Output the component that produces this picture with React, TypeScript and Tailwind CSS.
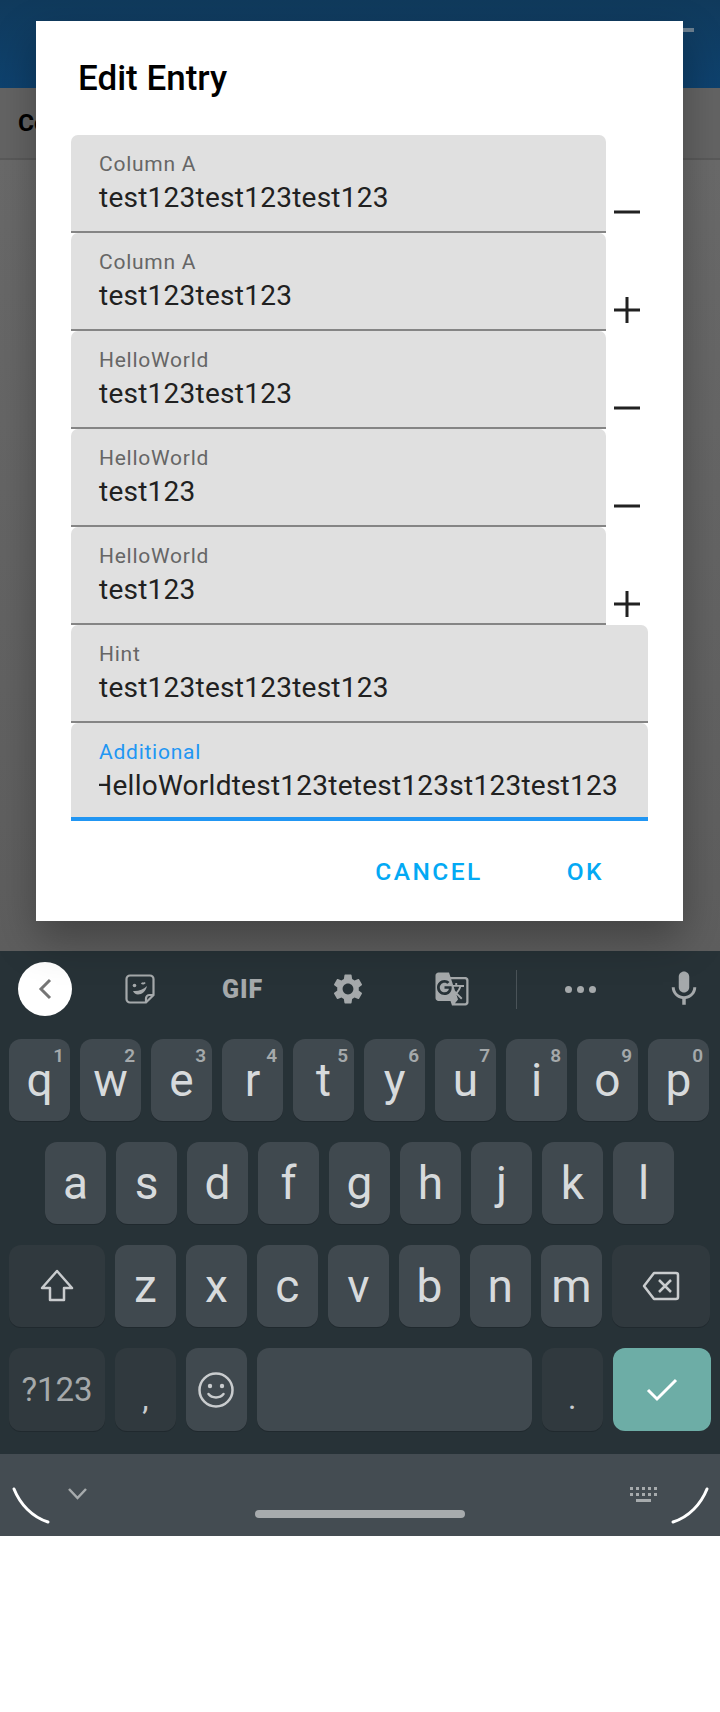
import { MdGTranslate, MdMic, MdSettings } from "react-icons/md";

const font = { fontFamily: "Roboto, sans-serif" };

const fields = [
    { label: "Column A", value: "test123test123test123", icon: "minus" },
    { label: "Column A", value: "test123test123", icon: "plus" },
    { label: "HelloWorld", value: "test123test123", icon: "minus" },
    { label: "HelloWorld", value: "test123", icon: "minus" },
    { label: "HelloWorld", value: "test123", icon: "plus" },
];

const topRow = [
    ["q", "1"], ["w", "2"], ["e", "3"], ["r", "4"], ["t", "5"],
    ["y", "6"], ["u", "7"], ["i", "8"], ["o", "9"], ["p", "0"],
];

const FieldIcon = ({ icon }: { icon: string }) => (
    <svg viewBox="0 0 26 26" className="w-[26px] h-[26px] ml-2 mt-[64px] shrink-0" fill="#212121">
        <rect x="0" y="11.5" width="26" height="3" />
        {icon === "plus" && <rect x="11.5" y="0" width="3" height="26" />}
    </svg>
);

const Field = ({ label, value, focused }: { label: string; value: string; focused?: boolean }) => (
    <div className={`flex-1 h-[98px] bg-[#e0e0e0] rounded-t-[7px] pl-7 pt-[15px] min-w-0 ${focused ? "border-b-4 border-[#2196f3]" : "border-b-2 border-[#858585]"}`}>
        <div className={`text-[21px] leading-7 tracking-[0.75px] ${focused ? "text-[#2196f3]" : "text-[#666666]"}`}>{label}</div>
        {focused ? (
            <div className="w-[519px] overflow-hidden flex justify-end text-[28px] leading-9 tracking-[0.25px] mt-0.5 text-[#212121] whitespace-nowrap">
                <span className="shrink-0">HelloWorldtest123tetest123st123test123</span>
            </div>
        ) : (
            <div className="text-[28px] leading-9 tracking-[0.25px] mt-0.5 text-[#212121] whitespace-nowrap">{value}</div>
        )}
    </div>
);

const Key = ({ letter, hint }: { letter: string; hint?: string }) => (
    <div className="relative w-[61.2px] h-[82px] shrink-0 rounded-xl bg-[#40494f] shadow-[0_1px_0_#20292e] flex items-center justify-center text-[46px] leading-[76px] text-[#d7dadc]">
        {letter}
        {hint && <span className="absolute top-1 right-[6px] text-[19px] leading-[26px] font-semibold text-[#a5a9ab]">{hint}</span>}
    </div>
);

const SpecialKey = ({ width, children, className = "" }: { width: string; children?: React.ReactNode; className?: string }) => (
    <div className={`${width} h-full shrink-0 rounded-xl bg-[#30393e] shadow-[0_1px_0_#20292e] flex items-center justify-center ${className}`}>
        {children}
    </div>
);

const Dialog = () => (
    <div className="absolute left-9 top-[21px] w-[647px] bg-white shadow-[0_18px_40px_rgba(0,0,0,0.3)] pt-[34px] pb-6" style={font}>
        <h2 className="pl-[42px] text-[35px] leading-[48px] font-medium text-black mb-8">Edit Entry</h2>
        <div className="px-[35px]">
            {fields.map((f, i) => (
                <div className="flex items-start w-[577px]" key={i}>
                    <div className="w-[535px] shrink-0 flex">
                        <Field label={f.label} value={f.value} />
                    </div>
                    <FieldIcon icon={f.icon} />
                </div>
            ))}
            <div className="flex w-[577px]">
                <Field label="Hint" value="test123test123test123" />
            </div>
            <div className="flex w-[577px]">
                <Field label="Additional" value="" focused />
            </div>
        </div>
        <div className="flex justify-end items-center gap-[84px] pr-[79px] mt-[26px] h-[50px] text-[24.5px] font-medium tracking-[2.45px] text-[#03a9f4]">
            <span>CANCEL</span>
            <span>OK</span>
        </div>
    </div>
);

export default function App() {
    return (
        <div className="w-[720px] h-[1712px] bg-white" style={font}>
            {/* dimmed screen behind the dialog */}
            <div className="relative h-[951px] flex flex-col bg-[#676767]">
                <div className="h-[88px] bg-gradient-to-b from-[#103a5c] to-[#0e426f] flex justify-end pr-[26px] pt-7">
                    <div className="w-6 h-1 bg-[#6b7f90]" />
                </div>
                <div className="h-[72px] bg-[#646464] border-b-2 border-[#5a5a5a] flex items-center pl-[18px] text-[24.5px] font-bold text-black">
                    Column A
                </div>
                <div className="flex-1 bg-gradient-to-b from-[#6a6a6a] to-[#5e5e5e]" />
                <Dialog />
            </div>

            {/* keyboard */}
            <div className="bg-[#273237] pb-[23px]">
                <div className="h-[76px] flex items-center text-[#a5a9ab]">
                    <div className="ml-[18px] w-[54px] h-[54px] rounded-full bg-white flex items-center justify-center shrink-0">
                        <svg viewBox="0 0 14 22" className="w-[14px] h-[22px]" fill="none" stroke="#757575" strokeWidth="3">
                            <path d="M12 2 3 11l9 9" />
                        </svg>
                    </div>
                    <svg viewBox="0 0 30 30" className="ml-[53px] w-[30px] h-[30px] shrink-0" fill="none" stroke="#a5a9ab" strokeWidth="2.2">
                        <path d="M21 28.5H5a3.5 3.5 0 0 1-3.5-3.5V5A3.5 3.5 0 0 1 5 1.500h20A3.500 3.500 0 0 1 28.500 5v16Z" />
                        <path d="M21 28.5v-4a3.500 3.500 0 0 1 3.500-3.500h4" />
                        <path d="M8 17c5 .5 10-1 14-5-1 5-5 8.500-9 8.500-2.500 0-4-1.500-5-3.500Z" fill="#a5a9ab" stroke="none" />
                        <circle cx="9.500" cy="11.500" r="1.800" fill="#a5a9ab" stroke="none" />
                        <path d="M16.500 9c1 .8 2.500.8 3.500-.5" strokeWidth="2" />
                    </svg>
                    <span className="ml-[67px] w-[41px] text-[25px] leading-none font-black tracking-[1px] text-[#a5a9ab] text-center shrink-0">GIF</span>
                    <MdSettings className="ml-[67px] w-[36px] h-[36px] shrink-0" color="#a5a9ab" />
                    <MdGTranslate className="ml-[68px] w-[36px] h-[36px] shrink-0" color="#a5a9ab" />
                    <div className="ml-[46px] w-px h-[39px] bg-[#4a5358] shrink-0" />
                    <div className="ml-[48px] flex gap-[5px] shrink-0">
                        <span className="w-[7px] h-[7px] rounded-full bg-[#a5a9ab]" />
                        <span className="w-[7px] h-[7px] rounded-full bg-[#a5a9ab]" />
                        <span className="w-[7px] h-[7px] rounded-full bg-[#a5a9ab]" />
                    </div>
                    <MdMic className="ml-[67px] w-[42px] h-[42px] shrink-0" color="#a5a9ab" />
                </div>

                <div className="mt-3 flex flex-col gap-[21px] px-[9px]">
                    <div className="flex gap-[9.8px] h-[82px]">
                        {topRow.map(([l, h]) => <Key key={l} letter={l} hint={h} />)}
                    </div>
                    <div className="flex gap-[9.8px] h-[82px] pl-9">
                        {["a", "s", "d", "f", "g", "h", "j", "k", "l"].map((l) => <Key key={l} letter={l} />)}
                    </div>
                    <div className="flex gap-[9.8px] h-[82px]">
                        <SpecialKey width="w-[96px]">
                            <svg viewBox="0 0 36 34" className="w-[36px] h-[34px]" fill="none" stroke="#c9ccce" strokeWidth="2.500" strokeLinejoin="round">
                                <path d="M18 2 33 19h-8v12H11V19H3Z" />
                            </svg>
                        </SpecialKey>
                        {["z", "x", "c", "v", "b", "n", "m"].map((l) => <Key key={l} letter={l} />)}
                        <SpecialKey width="w-[98px]">
                            <svg viewBox="0 0 38 30" className="w-[38px] h-[30px]" fill="none" stroke="#c9ccce" strokeWidth="2.500" strokeLinejoin="round">
                                <path d="M12 2h22a2 2 0 0 1 2 2v22a2 2 0 0 1-2 2H12L2 15Z" />
                                <path d="m17 9 12 12M29 9 17 21" />
                            </svg>
                        </SpecialKey>
                    </div>
                    <div className="flex gap-[9.8px] h-[83px]">
                        <SpecialKey width="w-[96px]" className="text-[33px] text-[#a5a9ab]">?123</SpecialKey>
                        <SpecialKey width="w-[61.2px]" className="items-end pb-[17px] text-[32px] leading-none text-[#c9ccce]">,</SpecialKey>
                        <div className="w-[61.2px] h-full shrink-0 rounded-xl bg-[#40494f] shadow-[0_1px_0_#20292e] flex items-center justify-center">
                            <svg viewBox="0 0 38 38" className="w-[38px] h-[38px]" fill="none" stroke="#c9ccce" strokeWidth="2.500">
                                <circle cx="19" cy="19" r="16.500" />
                                <circle cx="13" cy="15" r="2.200" fill="#c9ccce" stroke="none" />
                                <circle cx="25" cy="15" r="2.200" fill="#c9ccce" stroke="none" />
                                <path d="M11.500 23c3.500 4.500 11.500 4.500 15 0" strokeLinecap="round" />
                            </svg>
                        </div>
                        <div className="w-[275px] h-full shrink-0 rounded-xl bg-[#40494f] shadow-[0_1px_0_#20292e]" />
                        <SpecialKey width="w-[61.2px]" className="items-end pb-[17px] text-[32px] leading-none text-[#c9ccce]">.</SpecialKey>
                        <div className="w-[98px] h-full shrink-0 rounded-xl bg-[#6dada6] flex items-center justify-center">
                            <svg viewBox="0 0 32 24" className="w-[32px] h-[24px]" fill="none" stroke="white" strokeWidth="3">
                                <path d="m2 12 9 9L30 2" />
                            </svg>
                        </div>
                    </div>
                </div>
            </div>

            {/* nav bar */}
            <div className="h-[82px] bg-[#444c52] flex items-start">
                <svg viewBox="0 0 38 37" className="ml-3 mt-[33px] w-[38px] h-[37px] shrink-0" fill="none" stroke="white" strokeWidth="3" strokeLinecap="round">
                    <path d="M2 2c6 15 18 28 34 33" />
                </svg>
                <svg viewBox="0 0 21 16" className="ml-[17px] mt-[32px] w-[21px] h-4 shrink-0" fill="none" stroke="#a7abad" strokeWidth="2.500">
                    <path d="m2 3 8.500 9L19 3" />
                </svg>
                <div className="ml-[167px] mt-14 w-[210px] h-2 rounded-full bg-[#a7abad] shrink-0" />
                <svg viewBox="0 0 27 15" className="ml-[165px] mt-[33px] w-[27px] h-[15px] shrink-0" fill="#a7abad">
                    <path d="M0 0h3v3H0zM6 0h3v3H6zM12 0h3v3h-3zM18 0h3v3h-3zM24 0h3v3h-3zM0 6h3v3H0zM6 6h3v3H6zM12 6h3v3h-3zM18 6h3v3h-3zM24 6h3v3h-3zM6 12h15v3H6z" />
                </svg>
                <svg viewBox="0 0 38 37" className="ml-[14px] mt-[33px] w-[38px] h-[37px] shrink-0" fill="none" stroke="white" strokeWidth="3" strokeLinecap="round">
                    <path d="M36 2C30 17 18 30 2 35" />
                </svg>
            </div>
        </div>
    );
}
